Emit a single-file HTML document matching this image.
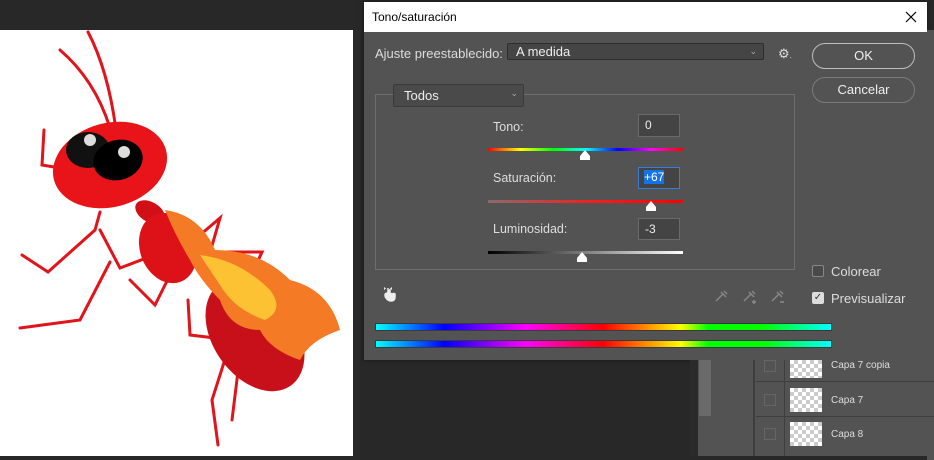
<!DOCTYPE html>
<html><head><meta charset="utf-8"><style>
*{margin:0;padding:0;box-sizing:border-box}
body{width:934px;height:456px;overflow:hidden;background:#282828;position:relative;font-family:"Liberation Sans",sans-serif;font-size:12px;color:#e6e6e6}
.abs{position:absolute}
.canvas{left:0;top:30px;width:353px;height:426px;background:#fff}
.dlg{left:364px;top:2px;width:563px;height:358px;background:#535353;box-shadow:0 0 4px rgba(0,0,0,.5)}
.title{left:0;top:0;width:563px;height:30px;background:#fff;color:#000;font-size:12px;padding:8px 0 0 8px}
.dd{background:#454545;border:1px solid #2e2e2e;border-radius:2px;color:#eee;font-size:13px}
.btn{border:1px solid #bdbdbd;border-radius:13px;text-align:center;color:#eee;font-size:13px;line-height:24px}
.field{background:#444;border:1px solid #6a6a6a;color:#eee;font-size:12px;padding:3px 0 0 6px}
.lbl{font-size:12.5px;color:#ddd}
.cb{width:12px;height:12px;border:1px solid #999;border-radius:2px}
</style></head><body>
<div class="abs canvas"></div>
<svg class="abs" style="left:0;top:0" width="353" height="456">
 <g stroke="#e0141a" stroke-width="3" fill="none" stroke-linecap="round">
  <path d="M88 32 Q108 70 116 130"/><path d="M60 50 Q95 80 110 128"/>
  <path d="M44 130 L42 165 L60 168"/>
  <path d="M100 212 L95 230 L48 272"/><path d="M48 272 L22 255"/>
  <path d="M110 262 L80 320 L20 328"/>
  <path d="M162 252 L120 268 L100 230"/>
  <path d="M170 275 L155 305 L130 280"/>
  <path d="M200 235 L220 218 L205 270"/><path d="M212 252 L262 252 L240 300"/>
  <path d="M188 300 L190 335 L215 338"/>
  <path d="M228 350 L212 400 L218 445"/><path d="M240 355 L232 420"/>
 </g>
 <ellipse cx="110" cy="165" rx="58" ry="42" fill="#e8141a" transform="rotate(-15 110 165)"/>
 <ellipse cx="88" cy="150" rx="22" ry="18" fill="#111"/>
 <ellipse cx="118" cy="160" rx="25" ry="20" fill="#000" transform="rotate(-15 118 160)"/>
 <circle cx="90" cy="140" r="6" fill="#ddd"/><circle cx="124" cy="152" r="6" fill="#ddd"/>
 <ellipse cx="150" cy="212" rx="16" ry="10" fill="#d01016" transform="rotate(30 150 212)"/>
 <ellipse cx="168" cy="248" rx="28" ry="36" fill="#dd1218" transform="rotate(-20 168 248)"/>
 <ellipse cx="255" cy="335" rx="42" ry="62" fill="#c8101a" transform="rotate(-35 255 335)"/>
 <path d="M165 210 Q200 215 215 250 Q260 250 290 280 Q330 290 340 330 Q310 340 300 360 Q270 350 260 330 Q230 330 220 300 Q200 280 190 260 Q175 235 165 210Z" fill="#f57a25"/>
 <path d="M200 255 Q240 260 270 290 Q285 310 265 320 Q235 310 220 285Z" fill="#fdc233"/>
</svg>
<div class="abs dlg">
 <div class="abs title">Tono/saturación</div>
 <svg class="abs" style="left:541px;top:9px" width="12" height="12"><path d="M1 1L11 11M11 1L1 11" stroke="#000" stroke-width="1.2"/></svg>
 <div class="abs lbl" style="left:11px;top:44px;font-size:13px">Ajuste preestablecido:</div>
 <div class="abs dd" style="left:143px;top:41px;width:257px;height:17px;padding:0 0 0 8px;line-height:15px">A medida<span style="position:absolute;right:6px;font-size:9px;color:#aaa">&#8964;</span></div>
 <div class="abs" style="left:414px;top:44px;font-size:13px;color:#ddd">&#9881;<span style="font-size:8px">.</span></div>
 <div class="abs btn" style="left:448px;top:41px;width:103px;height:26px">OK</div>
 <div class="abs btn" style="left:448px;top:75px;width:103px;height:26px;border-color:#7a7a7a">Cancelar</div>
 <div class="abs" style="left:11px;top:92px;width:420px;height:176px;border:1px solid #6e6e6e"></div>
 <div class="abs dd" style="left:29px;top:82px;width:131px;height:23px;padding:3px 0 0 10px;background:#4a4a4a;border-color:#3a3a3a">Todos<span style="position:absolute;right:5px;top:3px;font-size:9px;color:#aaa">&#8964;</span></div>
 <div class="abs lbl" style="left:129px;top:118px">Tono:</div>
 <div class="abs field" style="left:274px;top:112px;width:42px;height:23px">0</div>
 <div class="abs" style="left:124px;top:146px;width:195px;height:3px;background:linear-gradient(90deg,#f00,#ff0,#0f0,#0ff,#00f,#f0f,#f00)"></div>
 <svg class="abs" style="left:215px;top:148px" width="12" height="11"><path d="M6 0L11 6V10H1V6Z" fill="#fff"/></svg>
 <div class="abs lbl" style="left:129px;top:169px">Saturación:</div>
 <div class="abs field" style="left:274px;top:165px;width:42px;height:22px;border-color:#3a7bd5;padding:2px 0 0 5px"><span style="background:#1473e6;color:#fff">+67</span></div>
 <div class="abs" style="left:124px;top:198px;width:195px;height:3px;background:linear-gradient(90deg,#8a6b6b,#e22,#f00)"></div>
 <svg class="abs" style="left:281px;top:199px" width="12" height="11"><path d="M6 0L11 6V10H1V6Z" fill="#fff"/></svg>
 <div class="abs lbl" style="left:129px;top:220px">Luminosidad:</div>
 <div class="abs field" style="left:274px;top:216px;width:42px;height:22px">-3</div>
 <div class="abs" style="left:124px;top:249px;width:195px;height:3px;background:linear-gradient(90deg,#000,#fff)"></div>
 <svg class="abs" style="left:212px;top:250px" width="12" height="11"><path d="M6 0L11 6V10H1V6Z" fill="#fff"/></svg>
 <svg class="abs" style="left:17px;top:283px" width="16" height="18"><path d="M7 3V11M5 8Q3 10 5 13Q7 16 10 16Q14 16 14 12V9Q13 8 11 9Q10 8 9 9V4" fill="#eee" stroke="#eee" stroke-width="1.5"/><path d="M3 2L5 3.5 3 5ZM11 2L9 3.5 11 5Z" fill="#eee"/></svg>
 <svg class="abs" style="left:350px;top:286px" width="80" height="16"><g stroke="#8a8a8a" stroke-width="1.4" fill="none"><path d="M2 13L9 6M7 4L12 9"/><path d="M10 3L13 6"/><path d="M30 13L37 6M35 4L40 9M38 3L41 6"/><path d="M40 12V16M38 14H42"/><path d="M58 13L65 6M63 4L68 9M66 3L69 6M66 14H70"/></g></svg>
 <div class="abs" style="left:11px;top:321px;width:457px;height:8px;border:1px solid #3a3a3a;background:linear-gradient(90deg,#0ff,#00f 15%,#f0f 33%,#f00 50%,#ff0 67%,#0f0 73%,#0f0 85%,#0ff)"></div>
 <div class="abs" style="left:11px;top:338px;width:457px;height:8px;border:1px solid #3a3a3a;background:linear-gradient(90deg,#0ff,#00f 15%,#f0f 33%,#f00 50%,#ff0 67%,#0f0 73%,#0f0 85%,#0ff)"></div>
 <div class="abs cb" style="left:448px;top:263px;border-color:#888;background:#4a4a4a"></div>
 <div class="abs lbl" style="left:467px;top:262px;font-size:13px">Colorear</div>
 <div class="abs cb" style="left:448px;top:290px;background:#ddd;border-color:#ddd;color:#333;font-size:10px;line-height:10px;text-align:center">&#10003;</div>
 <div class="abs lbl" style="left:467px;top:289px;font-size:13px">Previsualizar</div>
</div>
<div class="abs" style="left:927px;top:30px;width:7px;height:430px;background:#535353"></div>
<div class="abs" style="left:690px;top:360px;width:244px;height:96px;background:#535353"></div>
<div class="abs" style="left:690px;top:360px;width:8px;height:96px;background:#2a2a2a"></div>
<div class="abs" style="left:699px;top:360px;width:12px;height:56px;background:#6a6a6a"></div>
<div class="abs" style="left:753px;top:360px;width:2px;height:96px;background:#3e3e3e"></div>
<div class="abs" style="left:756px;top:381px;width:178px;height:1px;background:#3e3e3e"></div>
<div class="abs" style="left:756px;top:416px;width:178px;height:1px;background:#3e3e3e"></div>
<div class="abs" style="left:784px;top:360px;width:1px;height:96px;background:#3e3e3e"></div>
<div class="abs" style="left:764px;top:360px;width:12px;height:12px;border:1px solid #666"></div>
<div class="abs" style="left:764px;top:394px;width:12px;height:12px;border:1px solid #666"></div>
<div class="abs" style="left:764px;top:428px;width:12px;height:12px;border:1px solid #666"></div>
<div class="abs" style="left:790px;top:360px;width:32px;height:18px;background:repeating-conic-gradient(#ccc 0 25%,#fff 0 50%) 0 0/8px 8px"></div>
<div class="abs" style="left:790px;top:388px;width:32px;height:24px;background:repeating-conic-gradient(#ccc 0 25%,#fff 0 50%) 0 0/8px 8px"></div>
<div class="abs" style="left:790px;top:422px;width:32px;height:24px;background:repeating-conic-gradient(#ccc 0 25%,#fff 0 50%) 0 0/8px 8px"></div>
<div class="abs" style="left:831px;top:360px;font-size:10px;color:#ddd">Capa 7 copia</div>
<div class="abs" style="left:831px;top:395px;font-size:10px;color:#ddd">Capa 7</div>
<div class="abs" style="left:831px;top:429px;font-size:10px;color:#ddd">Capa 8</div>
</body></html>
